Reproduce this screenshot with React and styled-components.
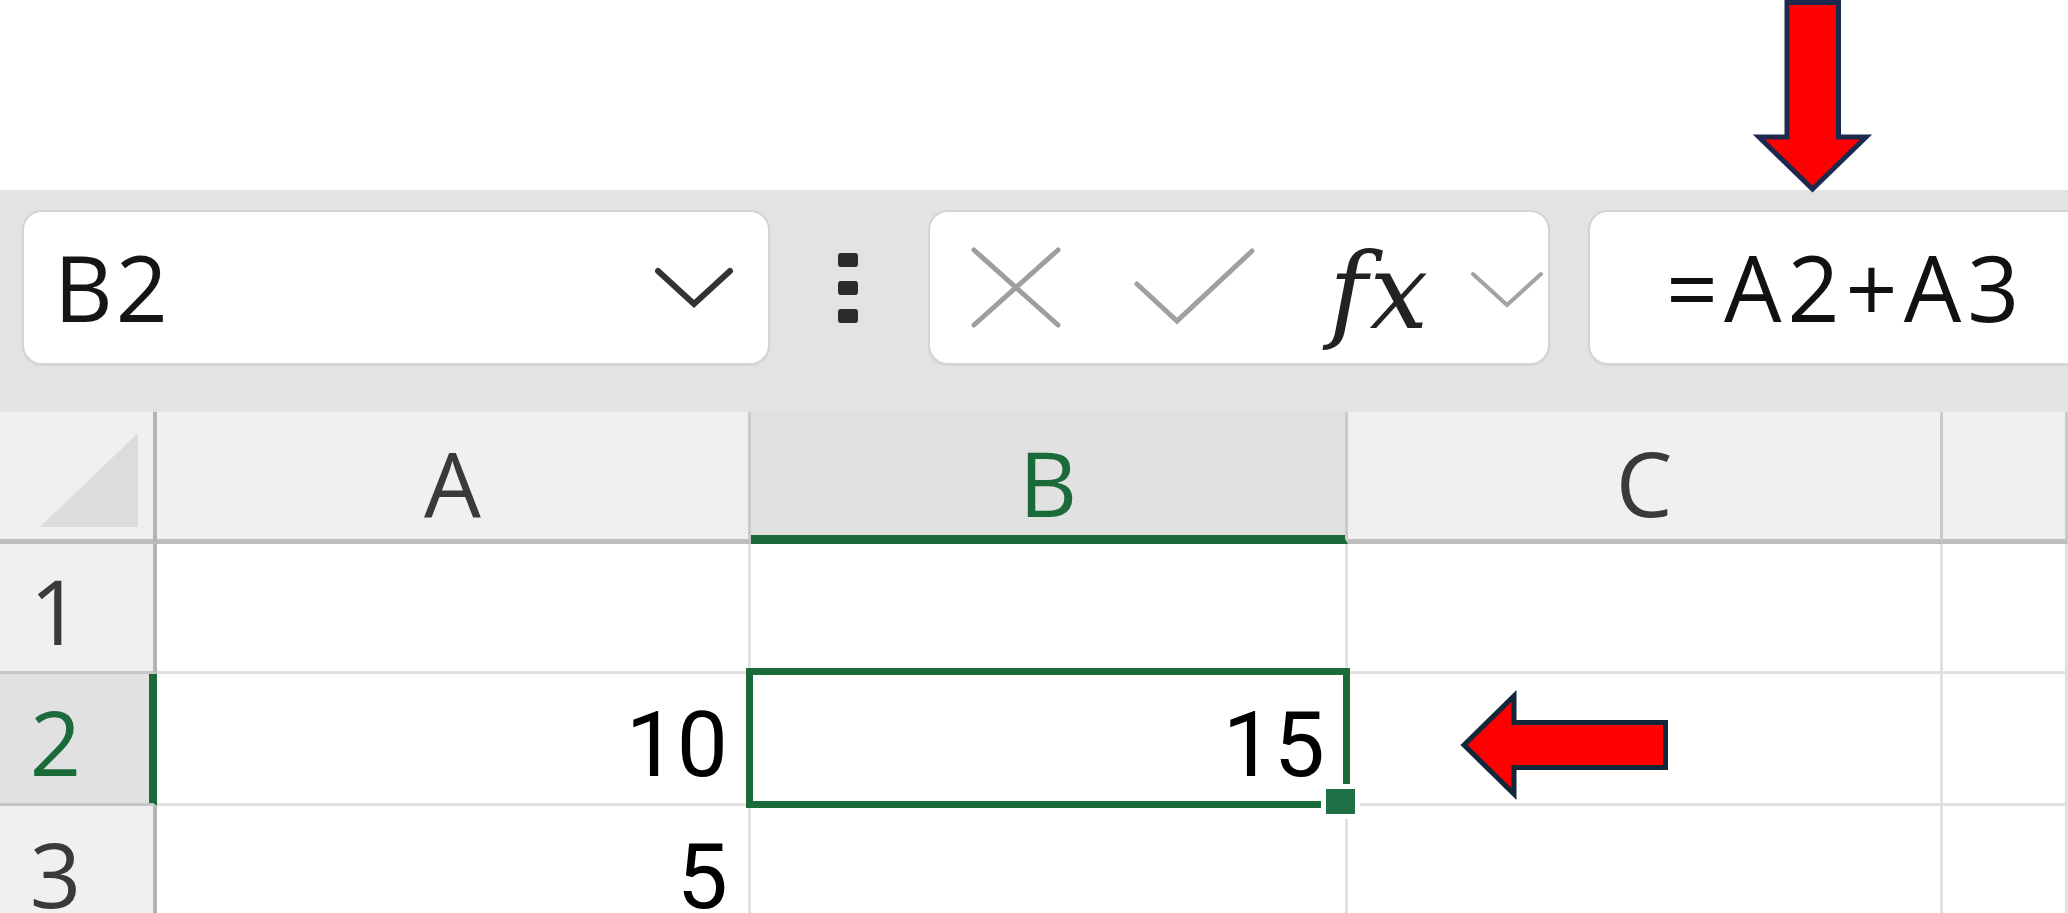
import React from 'react';
import styled, { createGlobalStyle } from 'styled-components';

const GlobalStyle = createGlobalStyle`
  html, body { margin: 0; padding: 0; width: 2068px; height: 913px; overflow: hidden; background: #ffffff; }
  #root { width: 2068px; height: 913px; }
`;

const GREEN = '#1b6b3a';

const Page = styled.div`
  position: relative;
  width: 2068px;
  height: 913px;
  overflow: hidden;
  background: #ffffff;
  font-family: "Open Sans", "Noto Sans", sans-serif;
`;

const TopGap = styled.div`
  height: 190px;
`;

const Toolbar = styled.div`
  box-sizing: border-box;
  height: 222px;
  background: #e3e3e3;
  display: flex;
  align-items: flex-start;
  padding: 20px 0 0 22px;
  overflow: hidden;
`;

const Field = styled.div`
  box-sizing: border-box;
  flex-shrink: 0;
  height: 155px;
  background: #ffffff;
  border: 2px solid #d4d4d4;
  border-radius: 20px;
  box-shadow: 0 1px 2px rgba(0, 0, 0, 0.06);
  display: flex;
  align-items: center;
`;

const NameBox = styled(Field)`
  width: 748px;
  justify-content: space-between;
  padding: 0 34px 0 30px;
`;

const CellRef = styled.span`
  font-size: 91px;
  line-height: 1;
  letter-spacing: 3px;
  color: #151515;
`;

const Dots = styled.div`
  flex-shrink: 0;
  margin: 43px 0 0 68px;
  display: flex;
  flex-direction: column;
  gap: 14px;
`;

const Dot = styled.span`
  display: block;
  width: 20px;
  height: 14px;
  border-radius: 3px;
  background: #2a2a2a;
`;

const FormulaButtons = styled(Field)`
  width: 622px;
  margin-left: 70px;
  padding-left: 40px;
`;

const IconSvg = styled.svg`
  flex-shrink: 0;
  display: block;
  margin-left: ${(p) => p.$gap || 0}px;
  margin-top: ${(p) => p.$dy || 0}px;
`;

const Fx = styled.span`
  flex-shrink: 0;
  width: 140px;
  margin-left: 72px;
  margin-top: 8px;
  font-family: "DejaVu Serif", "Liberation Serif", serif;
  font-style: italic;
  font-size: 104px;
  line-height: 1;
  letter-spacing: 2px;
  color: #222;
  white-space: nowrap;
`;

const FormulaBar = styled(Field)`
  width: 560px;
  margin-left: 38px;
  padding-left: 76px;
  border-right: none;
  border-top-right-radius: 0;
  border-bottom-right-radius: 0;
`;

const FormulaText = styled.span`
  font-size: 91px;
  line-height: 1;
  letter-spacing: 6px;
  color: #111;
`;

const Grid = styled.div`
  display: grid;
  grid-template-columns: 157px 594px 597px 595px 1fr;
  grid-template-rows: 132px 130px 132px 132px;
`;

const Corner = styled.div`
  box-sizing: border-box;
  background: #f0f0f0;
  border-right: 4px solid #b4b4b4;
  border-bottom: 5px solid #bdbdbd;
  display: flex;
  align-items: flex-end;
  justify-content: flex-end;
  padding: 0 15px 12px 0;
`;

const ColHeader = styled.div`
  box-sizing: border-box;
  background: ${(p) => (p.$selected ? '#e1e1e1' : '#f0f0f0')};
  border-right: 3px solid #cacaca;
  border-bottom: 5px solid ${(p) => (p.$selected ? GREEN : '#bdbdbd')};
  box-shadow: ${(p) => (p.$selected ? `inset 0 -4px 0 ${GREEN}` : 'none')};
  display: flex;
  align-items: center;
  justify-content: center;
  padding-top: 13px;
  font-size: 90px;
  line-height: 1;
  color: ${(p) => (p.$selected ? GREEN : '#3a3a3a')};
`;

const RowHeader = styled.div`
  box-sizing: border-box;
  background: ${(p) => (p.$selected ? '#e1e1e1' : '#f0f0f0')};
  border-right: 4px solid ${(p) => (p.$selected ? GREEN : '#b4b4b4')};
  border-bottom: 3px solid #c6c6c6;
  box-shadow: ${(p) => (p.$selected ? `inset -4px 0 0 ${GREEN}` : 'none')};
  display: flex;
  align-items: center;
  justify-content: center;
  padding: 4px 42px 0 0;
  font-size: 90px;
  line-height: 1;
  color: ${(p) => (p.$selected ? GREEN : '#3a3a3a')};
`;

const Cell = styled.div`
  position: relative;
  box-sizing: border-box;
  background: #ffffff;
  border-right: 3px solid #e0e0e0;
  border-bottom: 3px solid #e0e0e0;
  display: flex;
  align-items: flex-end;
  justify-content: flex-end;
  padding: 0 20px 12px 0;
  font-family: Roboto, "Liberation Sans", sans-serif;
  font-size: 91px;
  line-height: 1;
  color: #000;
`;

const Selection = styled.div`
  position: absolute;
  top: -6px;
  left: -5px;
  right: -5px;
  bottom: -5px;
  border: 7px solid ${GREEN};
  pointer-events: none;
  z-index: 2;
`;

const FillHandle = styled.div`
  position: absolute;
  right: -10px;
  bottom: -11px;
  width: 29px;
  height: 25px;
  background: #1f7145;
  box-shadow: 0 0 0 5px #ffffff;
  z-index: 3;
`;

const Overlay = styled.svg`
  position: absolute;
  left: ${(p) => p.$x}px;
  top: ${(p) => p.$y}px;
  z-index: 5;
  overflow: visible;
`;

function Chevron({ w, h, color, sw, gap, dy }) {
  return (
    <IconSvg width={w} height={h} viewBox={`0 0 ${w} ${h}`} $gap={gap} $dy={dy}>
      <polyline
        points={`4,4 ${w / 2},${h - 5} ${w - 4},4`}
        fill="none"
        stroke={color}
        strokeWidth={sw}
        strokeLinecap="round"
        strokeLinejoin="miter"
      />
    </IconSvg>
  );
}

const columns = ['A', 'B', 'C', ''];
const rows = [
  { n: '1', cells: ['', '', '', ''] },
  { n: '2', cells: ['10', '15', '', ''] },
  { n: '3', cells: ['5', '', '', ''] },
];

export default function App() {
  return (
    <Page>
      <GlobalStyle />
      <TopGap />
      <Toolbar>
        <NameBox>
          <CellRef>B2</CellRef>
          <Chevron w={80} h={42} color="#333" sw={6} />
        </NameBox>
        <Dots>
          <Dot />
          <Dot />
          <Dot />
        </Dots>
        <FormulaButtons>
          <IconSvg width={92} height={83} viewBox="0 0 92 83">
            <g stroke="#9e9e9e" strokeWidth="5" strokeLinecap="round">
              <line x1="4" y1="4" x2="88" y2="79" />
              <line x1="88" y1="4" x2="4" y2="79" />
            </g>
          </IconSvg>
          <IconSvg width={124} height={80} viewBox="0 0 124 80" $gap={71} $dy={-4}>
            <polyline
              points="4,38 44,75 119,5"
              fill="none"
              stroke="#a0a0a0"
              strokeWidth="5"
              strokeLinecap="round"
            />
          </IconSvg>
          <Fx>fx</Fx>
          <Chevron w={76} h={40} color="#a3a3a3" sw={4} dy={4} />
        </FormulaButtons>
        <FormulaBar>
          <FormulaText>=A2+A3</FormulaText>
        </FormulaBar>
      </Toolbar>

      <Grid>
        <Corner>
          <svg width="98" height="94" viewBox="0 0 98 94">
            <polygon points="98,0 98,94 0,94" fill="#dcdcdc" />
          </svg>
        </Corner>
        {columns.map((c) => (
          <ColHeader key={`h${c}`} $selected={c === 'B'}>
            {c}
          </ColHeader>
        ))}
        {rows.map((r) => (
          <React.Fragment key={r.n}>
            <RowHeader $selected={r.n === '2'}>{r.n}</RowHeader>
            {r.cells.map((v, i) => {
              const selected = r.n === '2' && i === 1;
              return (
                <Cell key={`${r.n}-${i}`}>
                  {v}
                  {selected && <Selection />}
                  {selected && <FillHandle />}
                </Cell>
              );
            })}
          </React.Fragment>
        ))}
      </Grid>

      <Overlay $x={1740} $y={0} width="140" height="200" viewBox="1740 0 140 200">
        <path
          d="M1787 2.5 L1838.5 2.5 L1838.5 137 L1866 137 L1812.5 189 L1759 137 L1787 137 Z"
          fill="#ff0000"
          stroke="#1b2a4c"
          strokeWidth="5"
          strokeLinejoin="miter"
        />
      </Overlay>
      <Overlay $x={1450} $y={685} width="230" height="120" viewBox="1450 685 230 120">
        <path
          d="M1464 745 L1514 696 L1514 722.5 L1665.5 722.5 L1665.5 767.5 L1514 767.5 L1514 794 Z"
          fill="#ff0000"
          stroke="#10283a"
          strokeWidth="5"
          strokeLinejoin="miter"
        />
      </Overlay>
    </Page>
  );
}
